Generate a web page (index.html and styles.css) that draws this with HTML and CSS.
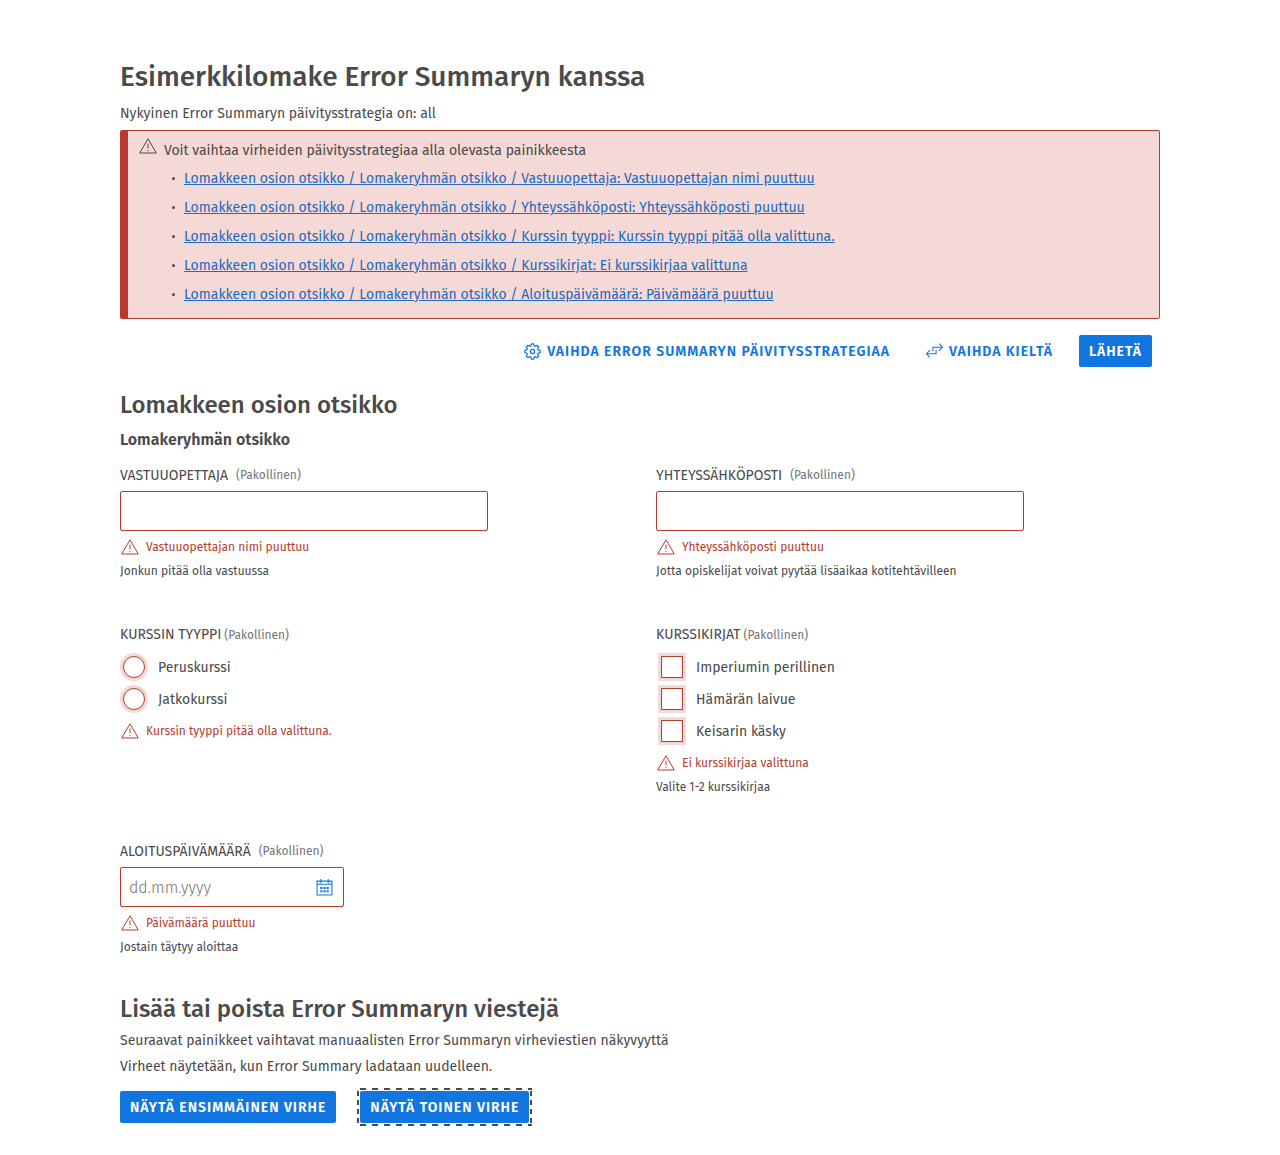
FILE: index.html
```html
<!DOCTYPE html>
<html lang="fi">
<head>
<meta charset="utf-8">
<meta name="viewport" content="width=device-width, initial-scale=1">
<title>Esimerkkilomake Error Summaryn kanssa</title>
<link rel="stylesheet" href="styles.css">
</head>
<body>
<svg class="sprite" aria-hidden="true">
  <symbol id="warning" viewBox="0 0 18 16">
    <path d="M9 .8 L17.3 15 H.7 Z M9 5.5 V10.5 M9 12 V13.2" fill="none" stroke="currentColor" stroke-linejoin="round"/>
  </symbol>
</svg>
<main class="page">
  <h1>Esimerkkilomake Error Summaryn kanssa</h1>
  <p>Nykyinen Error Summaryn päivitysstrategia on: all</p>

  <section class="summary">
    <div class="summary-title"><svg class="icon-warning"><use href="#warning"/></svg><span>Voit vaihtaa virheiden päivitysstrategiaa alla olevasta painikkeesta</span></div>
    <ul>
      <li><a href="#teacher">Lomakkeen osion otsikko / Lomakeryhmän otsikko / Vastuuopettaja: Vastuuopettajan nimi puuttuu</a></li>
      <li><a href="#email">Lomakkeen osion otsikko / Lomakeryhmän otsikko / Yhteyssähköposti: Yhteyssähköposti puuttuu</a></li>
      <li><a href="#type">Lomakkeen osion otsikko / Lomakeryhmän otsikko / Kurssin tyyppi: Kurssin tyyppi pitää olla valittuna.</a></li>
      <li><a href="#books">Lomakkeen osion otsikko / Lomakeryhmän otsikko / Kurssikirjat: Ei kurssikirjaa valittuna</a></li>
      <li><a href="#date">Lomakkeen osion otsikko / Lomakeryhmän otsikko / Aloituspäivämäärä: Päivämäärä puuttuu</a></li>
    </ul>
  </section>

  <div class="toolbar">
    <button class="btn btn-text" type="button">
      <svg class="icon-button" viewBox="0 0 24 24" fill="none" stroke="currentColor" stroke-width="1.8" stroke-linejoin="round"><path d="M9.8 3.8 10.4 1.2H13.6L14.2 3.8 16.24 4.65 18.51 3.23 20.77 5.49 19.35 7.76 20.2 9.8 22.8 10.4V13.6L20.2 14.2 19.35 16.24 20.77 18.51 18.51 20.77 16.24 19.35 14.2 20.2 13.6 22.8H10.4L9.8 20.2 7.76 19.35 5.49 20.77 3.23 18.51 4.65 16.24 3.8 14.2 1.2 13.6V10.4L3.8 9.8 4.65 7.76 3.23 5.49 5.49 3.23 7.76 4.65Z"/><circle cx="12" cy="12" r="3"/></svg>
      Vaihda Error Summaryn päivitysstrategiaa
    </button>
    <button class="btn btn-text" type="button">
      <svg class="icon-button" viewBox="0 0 16 16" fill="none" stroke="currentColor"><path d="M12.3.6 15.6 4 12.3 7.4M15.6 4H6.5V7.5M3.7 6.7.4 10.1 3.7 13.5M.4 10.1H9.5V6.6"/></svg>
      Vaihda kieltä
    </button>
    <button class="btn btn-primary" type="submit">Lähetä</button>
  </div>

  <h2>Lomakkeen osion otsikko</h2>
  <h3>Lomakeryhmän otsikko</h3>
  <form class="fields">
    <div class="field">
      <div class="label"><label for="teacher">Vastuuopettaja</label><span class="required">(Pakollinen)</span></div>
      <input class="text-input" id="teacher" type="text">
      <div class="error"><svg class="icon-warning"><use href="#warning"/></svg><span>Vastuuopettajan nimi puuttuu</span></div>
      <div class="help">Jonkun pitää olla vastuussa</div>
    </div>
    <div class="field">
      <div class="label"><label for="email">Yhteyssähköposti</label><span class="required">(Pakollinen)</span></div>
      <input class="text-input" id="email" type="email">
      <div class="error"><svg class="icon-warning"><use href="#warning"/></svg><span>Yhteyssähköposti puuttuu</span></div>
      <div class="help">Jotta opiskelijat voivat pyytää lisäaikaa kotitehtävilleen</div>
    </div>
    <fieldset class="field" id="type">
      <legend class="label label-tight"><span>Kurssin tyyppi</span><span class="required">(Pakollinen)</span></legend>
      <label class="choice"><input type="radio" name="type">Peruskurssi</label>
      <label class="choice"><input type="radio" name="type">Jatkokurssi</label>
      <div class="error"><svg class="icon-warning"><use href="#warning"/></svg><span>Kurssin tyyppi pitää olla valittuna.</span></div>
    </fieldset>
    <fieldset class="field" id="books">
      <legend class="label label-tight"><span>Kurssikirjat</span><span class="required">(Pakollinen)</span></legend>
      <label class="choice"><input type="checkbox">Imperiumin perillinen</label>
      <label class="choice"><input type="checkbox">Hämärän laivue</label>
      <label class="choice"><input type="checkbox">Keisarin käsky</label>
      <div class="error"><svg class="icon-warning"><use href="#warning"/></svg><span>Ei kurssikirjaa valittuna</span></div>
      <div class="help">Valite 1-2 kurssikirjaa</div>
    </fieldset>
    <div class="field">
      <div class="label"><label for="date">Aloituspäivämäärä</label><span class="required">(Pakollinen)</span></div>
      <div class="date-box">
        <input id="date" type="text" placeholder="dd.mm.yyyy">
        <button class="date-button" type="button" aria-label="Avaa kalenteri"><svg class="icon-button" viewBox="0 0 16 16"><path d="M1 2H15V15H1ZM1 5H15M4.5 0V4M11.5 0V4" fill="none" stroke="currentColor"/><path d="M4 7.5h2v2H4zM7 7.5h2v2H7zM10 7.5h2v2h-2zM4 10.5h2v2H4zM7 10.5h2v2H7zM10 10.5h2v2h-2z" fill="currentColor"/></svg></button>
      </div>
      <div class="error"><svg class="icon-warning"><use href="#warning"/></svg><span>Päivämäärä puuttuu</span></div>
      <div class="help">Jostain täytyy aloittaa</div>
    </div>
  </form>

  <h2>Lisää tai poista Error Summaryn viestejä</h2>
  <p>Seuraavat painikkeet vaihtavat manuaalisten Error Summaryn virheviestien näkyvyyttä</p>
  <p>Virheet näytetään, kun Error Summary ladataan uudelleen.</p>
  <div class="actions">
    <button class="btn btn-primary" type="button">Näytä ensimmäinen virhe</button>
    <button class="btn btn-primary is-focused" type="button">Näytä toinen virhe</button>
  </div>
</main>
</body>
</html>
```
FILE: styles.css
```css
* { box-sizing: border-box; }

body {
  margin: 0;
  background: #fff;
  color: #4a4a4a;
  font: 14px/26px "Fira Sans", Roboto, "Noto Sans", sans-serif;
}

.sprite { display: none; }

.page { padding: 57px 120px 32px; }

h1, h2, h3, p { margin: 0; }
h1 { font-size: 28px; line-height: 40px; font-weight: 500; margin-bottom: 4px; }
h2 { font-size: 24px; line-height: 36px; font-weight: 500; margin-bottom: 1px; }
h3 { font-size: 16px; line-height: 26px; font-weight: 600; margin: 4px 0 10px; }

.icon-warning { width: 18px; height: 16px; flex: none; }
.icon-button { width: 17px; height: 17px; flex: none; }

.summary {
  margin-top: 3px;
  padding: 7px 11px 9px;
  border: 1px solid #b63b2d;
  border-left-width: 8px;
  border-radius: 2px;
  background: #f5d9d6;
}
.summary-title { display: flex; gap: 7px; }
.summary ul { margin: 0; padding: 0 0 0 33px; list-style: none; }
.summary li { display: flex; align-items: center; gap: 9px; line-height: 29px; }
.summary li::before { content: ""; width: 3px; height: 3px; border-radius: 50%; background: #4a4a4a; }
.summary a { color: #2469bd; }

.toolbar { display: flex; justify-content: flex-end; gap: 16px; padding: 16px 8px 20px 0; }

.btn {
  display: inline-flex;
  align-items: center;
  gap: 6px;
  height: 32px;
  padding: 0 10px;
  border: 0;
  border-radius: 2px;
  font: 600 14px/21px "Fira Sans", Roboto, "Noto Sans", sans-serif;
  letter-spacing: 1px;
  text-transform: uppercase;
}
.btn-text { background: none; color: #1176df; }
.btn-primary { background: #1176df; color: #fff; }
.is-focused { position: relative; }
/* Focus ring with wide, even dashes on each side */
.is-focused::after {
  --across: linear-gradient(90deg, #4a4a4a 6px, transparent 6px);
  --down: linear-gradient(#4a4a4a 5px, transparent 5px);
  content: "";
  position: absolute;
  inset: -3px;
  background:
    var(--across) 3px 0 / 12px 2px repeat-x,
    var(--across) 3px 100% / 12px 2px repeat-x,
    var(--down) 0 3px / 2px 9px repeat-y,
    var(--down) 100% 3px / 2px 9px repeat-y;
}

.fields {
  display: grid;
  grid-template-columns: 1fr 1fr;
  gap: 40px 32px;
  align-items: start;
  margin-bottom: 32px;
}
.field { min-width: 0; margin: 0; padding: 0; border: 0; line-height: 24px; }
.label { display: flex; gap: 8px; padding: 0; margin-bottom: 3px; line-height: 25px; }
.label > :first-child { text-transform: uppercase; }
.label-tight { gap: 3px; margin-bottom: 4px; line-height: 24px; }
.required { font-size: 12px; line-height: 24px; color: #757575; }

.text-input, .date-box {
  display: block;
  width: 100%;
  max-width: 368px;
  height: 40px;
  padding: 0 8px;
  border: 1px solid #b63b2d;
  border-radius: 2px;
  background: #fff;
  font: inherit;
}
.date-box { display: flex; align-items: center; max-width: 224px; }
.date-box input {
  flex: 1;
  min-width: 0;
  padding: 2px 0 0;
  border: 0;
  background: none;
  outline: 0;
  color: inherit;
  font: 300 16px/24px "Fira Sans", Roboto, "Noto Sans", sans-serif;
}
.date-box input::placeholder { color: #757575; }
.date-button { display: flex; padding: 2px; border: 0; background: none; color: #1176df; }

.error {
  display: flex;
  align-items: center;
  gap: 7px;
  margin-top: 4px;
  padding-left: 1px;
  color: #b63b2d;
  font-size: 12px;
}
.help { font-size: 12px; }

.choice { display: flex; align-items: center; gap: 13px; height: 32px; line-height: 25px; }
.choice input {
  appearance: none;
  width: 22px;
  height: 22px;
  margin: 0 0 0 3px;
  border: 1px solid #b63b2d;
  background: #fff;
  box-shadow: 0 0 0 3px #f5d9d6;
}
.choice input[type="radio"] { border-radius: 50%; }
.choice input[type="checkbox"] { margin-left: 5px; }

.actions { display: flex; gap: 24px; margin-top: 11px; }
```
